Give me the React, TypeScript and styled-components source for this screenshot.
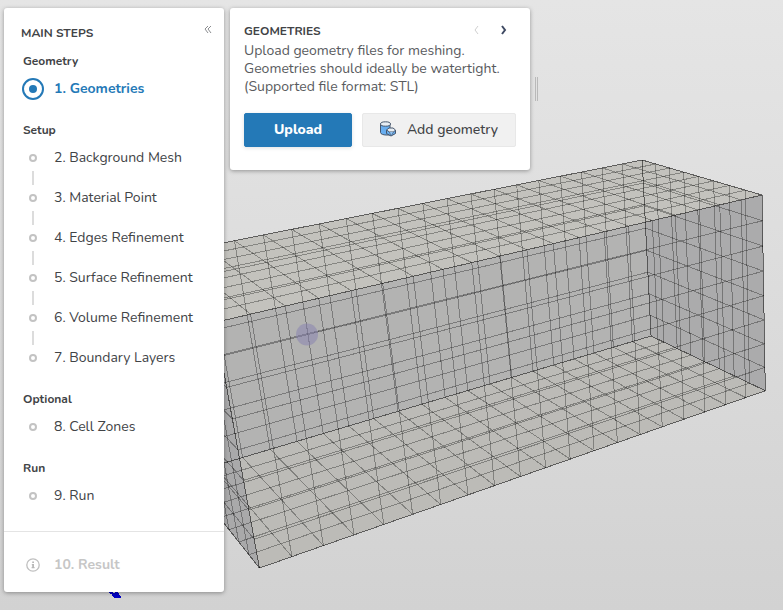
import React from "react";
import styled, { createGlobalStyle, css } from "styled-components";

const GlobalStyle = createGlobalStyle`
  * { box-sizing: border-box; }
  html, body { margin: 0; }
  body {
    font-family: Nunito, "Open Sans", "Noto Sans", sans-serif;
    font-size: 14px;
    color: #414346;
  }
  h2, h3, p, ul, ol { margin: 0; padding: 0; }
  ul, ol { list-style: none; }
  button { font: inherit; color: inherit; cursor: pointer; }
`;

const Workspace = styled.main`
  position: relative;
  min-height: 100vh;
  overflow: hidden;
  background: linear-gradient(#e5e5e5, #d2d2d2);
`;

const Scene = styled.svg`
  position: absolute;
  inset: 0;
  width: 100%;
  height: 100%;
`;

const Overlay = styled.div`
  position: relative;
  display: flex;
  align-items: flex-start;
  gap: 6px;
  padding: 8px 4px;
`;

const panel = css`
  background: #fff;
  border-radius: 3px;
  box-shadow: 0 1px 4px rgba(0, 0, 0, 0.35);
`;

const StepsPanel = styled.nav`
  ${panel}
  width: 220px;
  padding-bottom: 7px;
`;

const StepsHeader = styled.header`
  display: flex;
  align-items: flex-start;
  justify-content: space-between;
  height: 45px;
  padding: 16px 12px 0 17px;
`;

const PanelTitle = styled.h2`
  font-size: 12px;
  line-height: 18px;
  font-weight: 700;
`;

const IconButton = styled.button<{ $strong?: boolean }>`
  display: flex;
  padding: 0;
  border: 0;
  background: none;
  color: ${(p) => (p.$strong ? "#3f4a63" : "#8b8d90")};
  &:disabled { color: #cfcfcf; }
`;

const Group = styled.section`
  padding: 0 19px 13px;
`;

const GroupTitle = styled.h3`
  font-size: 12px;
  line-height: 16px;
  font-weight: 700;
`;

const StepList = styled.ol`
  padding: 0;
`;

const StepItem = styled.li`
  & + &::before {
    content: "";
    display: block;
    width: 2px;
    height: 14px;
    margin: -7px 0 -7px 9px;
    background: #dcdcdc;
  }
`;

const StepButton = styled.button<{ $active?: boolean }>`
  display: flex;
  align-items: center;
  gap: 11px;
  width: 100%;
  height: 40px;
  padding: 0;
  border: 0;
  background: none;
  text-align: left;
  white-space: nowrap;
  line-height: 20px;
  font-weight: ${(p) => (p.$active ? 700 : 400)};
  color: ${(p) => (p.$active ? "#2479b7" : "#414346")};
  &:disabled { color: #c6c6c6; font-weight: 700; }
`;

const Marker = styled.svg`
  flex: none;
  width: 20px;
  height: 22px;
  overflow: visible;
`;

const ResultBar = styled.footer`
  margin-top: 2px;
  padding: 13px 19px 0;
  border-top: 1px solid #e4e4e4;
`;

const GeometryPanel = styled.section`
  ${panel}
  width: 300px;
  padding: 14px 14px 23px;
`;

const GeometryHeader = styled.header`
  display: flex;
  align-items: center;
  justify-content: space-between;
  padding-right: 8px;
`;

const Pager = styled.div`
  display: flex;
  gap: 19px;
  padding-bottom: 2px;
`;

const Help = styled.p`
  line-height: 18px;
  padding-top: 2px;
  color: #595b5e;
  white-space: nowrap;
`;

const Actions = styled.div`
  display: flex;
  gap: 10px;
  padding-top: 17px;
`;

const ActionButton = styled.button<{ $primary?: boolean }>`
  display: flex;
  align-items: center;
  justify-content: center;
  gap: 11px;
  height: 34px;
  flex: ${(p) => (p.$primary ? "0 0 108px" : "1")};
  padding: 0 0 2px;
  border: 1px solid ${(p) => (p.$primary ? "#2479b7" : "#e8e8e8")};
  border-radius: 2px;
  background: ${(p) => (p.$primary ? "#2479b7" : "#f1f1f1")};
  color: ${(p) => (p.$primary ? "#fff" : "#414346")};
  font-weight: ${(p) => (p.$primary ? 800 : 500)};
  box-shadow: ${(p) => (p.$primary ? "0 1px 4px rgba(0,0,0,.12)" : "none")};
`;

const ResizeHandle = styled.div`
  width: 3px;
  height: 24px;
  margin: 69px 0 0 -1px;
  border: solid #b9b9b9;
  border-width: 0 1px;
  cursor: col-resize;
`;

type Vec = [number, number, number];
type Point = [number, number];

const ORIGIN: Vec = [765.3, 390.7, 1];
const AXES: [Vec, Vec, Vec] = [
  [-28.31, 2.26, -0.01163],
  [-5.8, -25.84, -0.00708],
  [-4.25, -1.66, 0.0154],
];
const CELLS: Vec = [20, 8, 8];

const project = (cell: Vec): Point => {
  const [x, y, w] = ORIGIN.map((o, n) =>
    cell.reduce((sum, c, axis) => sum + c * AXES[axis][n], o)
  );
  return [x / w, y / w];
};

interface Face {
  axis: number;
  level: number;
  fill: string;
}

const FACES: Face[] = [
  { axis: 1, level: 0, fill: "#bcbbb7" },
  { axis: 2, level: 8, fill: "#b3b3b2" },
  { axis: 0, level: 0, fill: "#ababac" },
  { axis: 0, level: 20, fill: "#a9a9aa" },
  { axis: 1, level: 8, fill: "#c3c2bd" },
  { axis: 2, level: 0, fill: "none" },
];

const facePoint = ({ axis, level }: Face, u: number, v: number): Point => {
  const cell: Vec = [u, u, u];
  const [, b] = [0, 1, 2].filter((n) => n !== axis);
  cell[axis] = level;
  cell[b] = v;
  return project(cell);
};

const faceSize = ({ axis }: Face) => CELLS.filter((_, n) => n !== axis);

function FaceFill({ face }: { face: Face }) {
  const [m, n] = faceSize(face);
  const corners = [
    facePoint(face, 0, 0),
    facePoint(face, m, 0),
    facePoint(face, m, n),
    facePoint(face, 0, n),
  ];
  return <polygon points={corners.join(" ")} fill={face.fill} />;
}

function FaceGrid({ face }: { face: Face }) {
  const [m, n] = faceSize(face);
  const segments: [Point, Point][] = [];
  for (let i = 0; i <= m; i++) segments.push([facePoint(face, i, 0), facePoint(face, i, n)]);
  for (let j = 0; j <= n; j++) segments.push([facePoint(face, 0, j), facePoint(face, m, j)]);
  return (
    <>
      {segments.map(([p, q], k) => (
        <line key={k} x1={p[0]} y1={p[1]} x2={q[0]} y2={q[1]} />
      ))}
    </>
  );
}

function MeshView() {
  return (
    <Scene viewBox="0 0 783 610" preserveAspectRatio="xMidYMid slice" role="img" aria-label="Background mesh">
      {FACES.map((face) => (
        <FaceFill key={`${face.axis}-${face.level}`} face={face} />
      ))}
      <g stroke="#000" strokeOpacity="0.31" shapeRendering="crispEdges">
        {FACES.map((face) => (
          <FaceGrid key={`${face.axis}-${face.level}`} face={face} />
        ))}
      </g>
      <circle cx="307" cy="334.500" r="11" fill="#8580b0" fillOpacity="0.5" />
      <path d="M109 592h3l1 1h2v-1h3v1h1v2h1v1h1v2h-7v-1h-1v-1h-1v-2h-2v-1h-1z" fill="#0000c4" shapeRendering="crispEdges" />
    </Scene>
  );
}

function StepMarker({ kind }: { kind: "active" | "idle" | "info" }) {
  return (
    <Marker viewBox="0 0 20 22" fill="none" aria-hidden="true">
      {kind === "active" && (
        <>
          <circle cx="10" cy="11" r="10" stroke="#2479b7" strokeWidth="2" />
          <circle cx="10" cy="11" r="4" fill="#2479b7" />
        </>
      )}
      {kind === "idle" && <circle cx="10" cy="11" r="3" stroke="#c3c3c3" strokeWidth="2" />}
      {kind === "info" && (
        <>
          <circle cx="10" cy="11" r="6.200" stroke="#bfbfbf" strokeWidth="1.300" />
          <path d="M9.200 7.400h1.800v1.600H9.200zM8.800 10h2.200v3h.6v1.200H8.600V13h.6v-1.800h-.4z" fill="#b8b8b8" />
        </>
      )}
    </Marker>
  );
}

function GeometryIcon() {
  return (
    <svg width="16" height="16" viewBox="0 0 16 16" stroke="#46566c" aria-hidden="true">
      <path d="M.5 3.500v8c0 1.500 3 2.500 5.500 2.500h4V3.500" fill="#68aef0" />
      <ellipse cx="5.500" cy="3" rx="5" ry="2.200" fill="#e8eef4" />
      <path d="M6.500 9v3.500L11 15l4.500-2.500V9" fill="#68aef0" />
      <path d="M6.500 9L9 7h4l2.500 2-2 2h-4z" fill="#e8eef4" />
      <path d="M9.500 11l1.500 4 2.500-4" fill="#8fc4f5" strokeOpacity="0.6" />
    </svg>
  );
}

function Chevron({ d, weight = 1 }: { d: string; weight?: number }) {
  return (
    <svg width="8" height="10" viewBox="0 0 8 10" fill="none" stroke="currentColor" strokeWidth={weight} aria-hidden="true">
      <path d={d} />
    </svg>
  );
}

const GROUPS = [
  { title: "Geometry", steps: ["1. Geometries"] },
  {
    title: "Setup",
    steps: [
      "2. Background Mesh",
      "3. Material Point",
      "4. Edges Refinement",
      "5. Surface Refinement",
      "6. Volume Refinement",
      "7. Boundary Layers",
    ],
  },
  { title: "Optional", steps: ["8. Cell Zones"] },
  { title: "Run", steps: ["9. Run"] },
];

export default function App() {
  return (
    <Workspace>
      <GlobalStyle />
      <MeshView />
      <Overlay>
        <StepsPanel aria-label="Main steps">
          <StepsHeader>
            <PanelTitle>MAIN STEPS</PanelTitle>
            <IconButton aria-label="Collapse">
              <Chevron d="M4 2L1 5l3 4M7 2L4 5l3 4" />
            </IconButton>
          </StepsHeader>
          {GROUPS.map((group) => (
            <Group key={group.title}>
              <GroupTitle>{group.title}</GroupTitle>
              <StepList>
                {group.steps.map((step) => {
                  const active = step === "1. Geometries";
                  return (
                    <StepItem key={step}>
                      <StepButton $active={active} aria-current={active ? "step" : undefined}>
                        <StepMarker kind={active ? "active" : "idle"} />
                        {step}
                      </StepButton>
                    </StepItem>
                  );
                })}
              </StepList>
            </Group>
          ))}
          <ResultBar>
            <StepButton disabled>
              <StepMarker kind="info" />
              10. Result
            </StepButton>
          </ResultBar>
        </StepsPanel>
        <GeometryPanel>
          <GeometryHeader>
            <PanelTitle>GEOMETRIES</PanelTitle>
            <Pager>
              <IconButton disabled aria-label="Previous">
                <Chevron d="M5 1L2 5l3 4" />
              </IconButton>
              <IconButton $strong aria-label="Next">
                <Chevron d="M2 1l3 4-3 4" weight={2} />
              </IconButton>
            </Pager>
          </GeometryHeader>
          <Help>
            Upload geometry files for meshing.
            <br />
            Geometries should ideally be watertight.
            <br />
            (Supported file format: STL)
          </Help>
          <Actions>
            <ActionButton $primary>Upload</ActionButton>
            <ActionButton>
              <GeometryIcon />
              Add geometry
            </ActionButton>
          </Actions>
        </GeometryPanel>
        <ResizeHandle role="separator" aria-orientation="vertical" aria-label="Resize panel" />
      </Overlay>
    </Workspace>
  );
}
